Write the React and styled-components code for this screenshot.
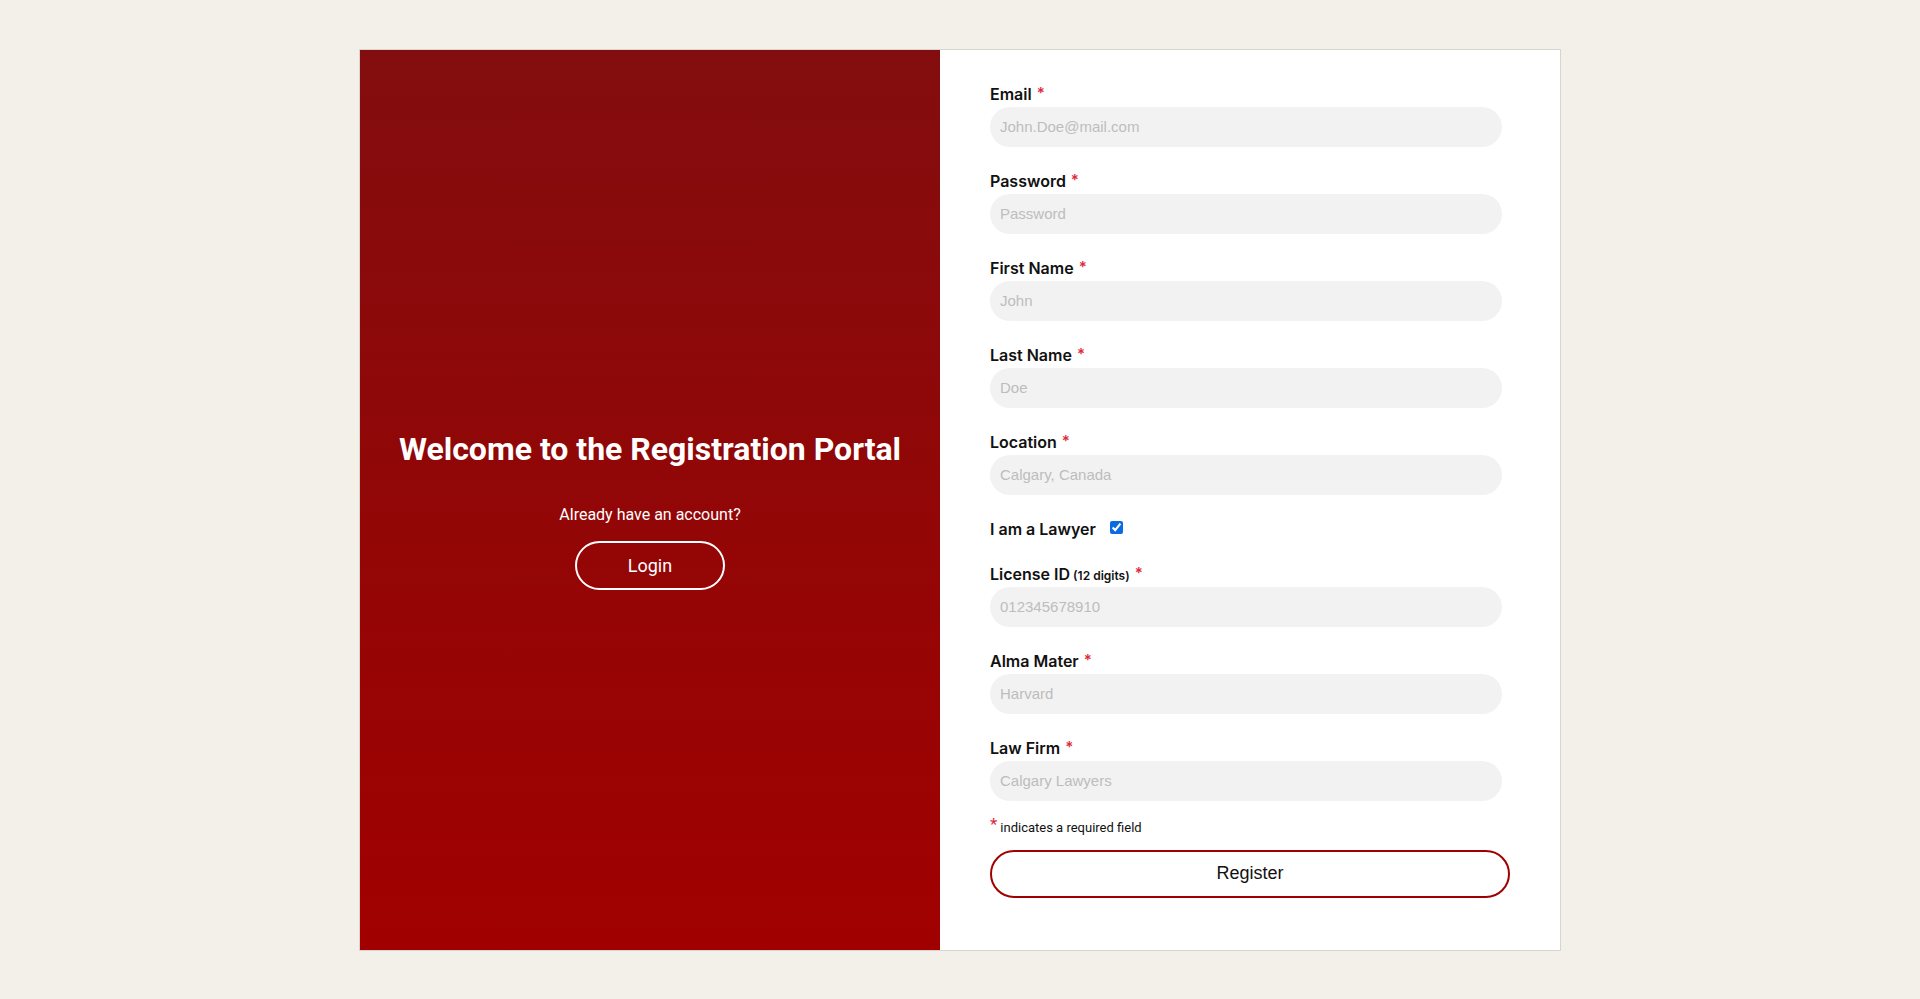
import React from "react";
import styled, { createGlobalStyle } from "styled-components";

const Global = createGlobalStyle`
  * { box-sizing: border-box; }
  html, body { margin: 0; padding: 0; background: #f3f0ea; }
  body { font-family: Roboto, "Liberation Sans", Arial, sans-serif; }
`;

const Page = styled.div`
  min-height: 999px;
  display: flex;
  align-items: center;
  justify-content: center;
`;

const Card = styled.div`
  width: 1202px;
  height: 902px;
  border: 1px solid #d8d5cf;
  background: #fff;
  display: flex;
`;

const Side = styled.section`
  width: 580px;
  flex: none;
  background: linear-gradient(to bottom, #830d0e 0%, #a10000 100%);
  color: #fff;
  display: flex;
  flex-direction: column;
  align-items: center;
  justify-content: center;
  padding-top: 20px;
`;

const Title = styled.h1`
  margin: 0;
  font-family: Roboto, sans-serif;
  font-weight: 700;
  font-size: 32px;
  line-height: 38px;
`;

const Prompt = styled.p`
  margin: 37px 0 0;
  font-family: Roboto, sans-serif;
  font-size: 16px;
  line-height: 19px;
`;

const GhostButton = styled.button`
  margin-top: 17px;
  width: 150px;
  height: 49px;
  border: 2px solid #fff;
  border-radius: 25px;
  background: transparent;
  color: #fff;
  font-family: Roboto, sans-serif;
  font-size: 18px;
`;

const FormPane = styled.form`
  flex: 1;
  padding: 33px 50px 0;
  display: flex;
  flex-direction: column;
`;

const Field = styled.div`
  display: flex;
  flex-direction: column;
  margin-bottom: 23px;
`;

const Label = styled.label`
  display: block;
  height: 20px;
  font-family: Inter, "Open Sans", sans-serif;
  font-weight: 600;
  font-size: 16px;
  line-height: 22px;
  color: #111;
  margin-bottom: 4px;
  white-space: nowrap;
`;

const Small = styled.span`
  font-size: 12px;
`;

const Req = styled.span`
  position: relative;
  top: -2px;
  color: #e0283a;
  margin-left: 5px;
  font-size: 15px;
`;

const Input = styled.input`
  display: block;
  width: 512px;
  height: 40px;
  border: none;
  border-radius: 20px;
  background: #f2f2f2;
  padding: 0 10px;
  font-family: "Liberation Sans", Arial, sans-serif;
  font-size: 15px;
  color: #333;
  outline: none;
  &::placeholder { color: #bdbdbd; }
`;

const CheckRow = styled.div`
  display: flex;
  align-items: center;
  gap: 14px;
  height: 20px;
  margin: 0 0 25px;
`;

const CheckLabel = styled(Label)`
  margin: 0;
`;

const Check = styled.input`
  margin: 0;
  width: 13px;
  height: 13px;
  accent-color: #0b6be0;
`;

const Note = styled.p`
  margin: -6px 0 0;
  height: 16px;
  font-family: Roboto, sans-serif;
  font-size: 13px;
  line-height: 16px;
  color: #111;
`;

const NoteStar = styled.span`
  position: relative;
  top: -2px;
  color: #e0283a;
  font-size: 17px;
  margin-right: 3px;
`;

const Submit = styled.button`
  margin-top: 16px;
  width: 520px;
  height: 48px;
  border: 2px solid #a10000;
  border-radius: 24px;
  background: #fff;
  color: #111;
  font-family: "Liberation Sans", Arial, sans-serif;
  font-size: 18px;
`;

const fields1 = [
  { label: "Email", ph: "John.Doe@mail.com" },
  { label: "Password", ph: "Password", type: "password" },
  { label: "First Name", ph: "John" },
  { label: "Last Name", ph: "Doe" },
  { label: "Location", ph: "Calgary, Canada" },
];

const fields2 = [
  { label: "License ID", extra: "(12 digits)", ph: "012345678910" },
  { label: "Alma Mater", ph: "Harvard" },
  { label: "Law Firm", ph: "Calgary Lawyers" },
];

const FieldBlock = ({ f }) => (
  <Field>
    <Label>
      {f.label}
      {f.extra && <Small> {f.extra}</Small>}
      <Req>*</Req>
    </Label>
    <Input type={f.type || "text"} placeholder={f.ph} />
  </Field>
);

export default function App() {
  return (
    <>
      <Global />
      <Page>
        <Card>
          <Side>
            <Title>Welcome to the Registration Portal</Title>
            <Prompt>Already have an account?</Prompt>
            <GhostButton type="button">Login</GhostButton>
          </Side>
          <FormPane onSubmit={(e) => e.preventDefault()}>
            {fields1.map((f) => (
              <FieldBlock key={f.label} f={f} />
            ))}
            <CheckRow>
              <CheckLabel>I am a Lawyer</CheckLabel>
              <Check type="checkbox" defaultChecked />
            </CheckRow>
            {fields2.map((f) => (
              <FieldBlock key={f.label} f={f} />
            ))}
            <Note>
              <NoteStar>*</NoteStar>indicates a required field
            </Note>
            <Submit type="submit">Register</Submit>
          </FormPane>
        </Card>
      </Page>
    </>
  );
}
